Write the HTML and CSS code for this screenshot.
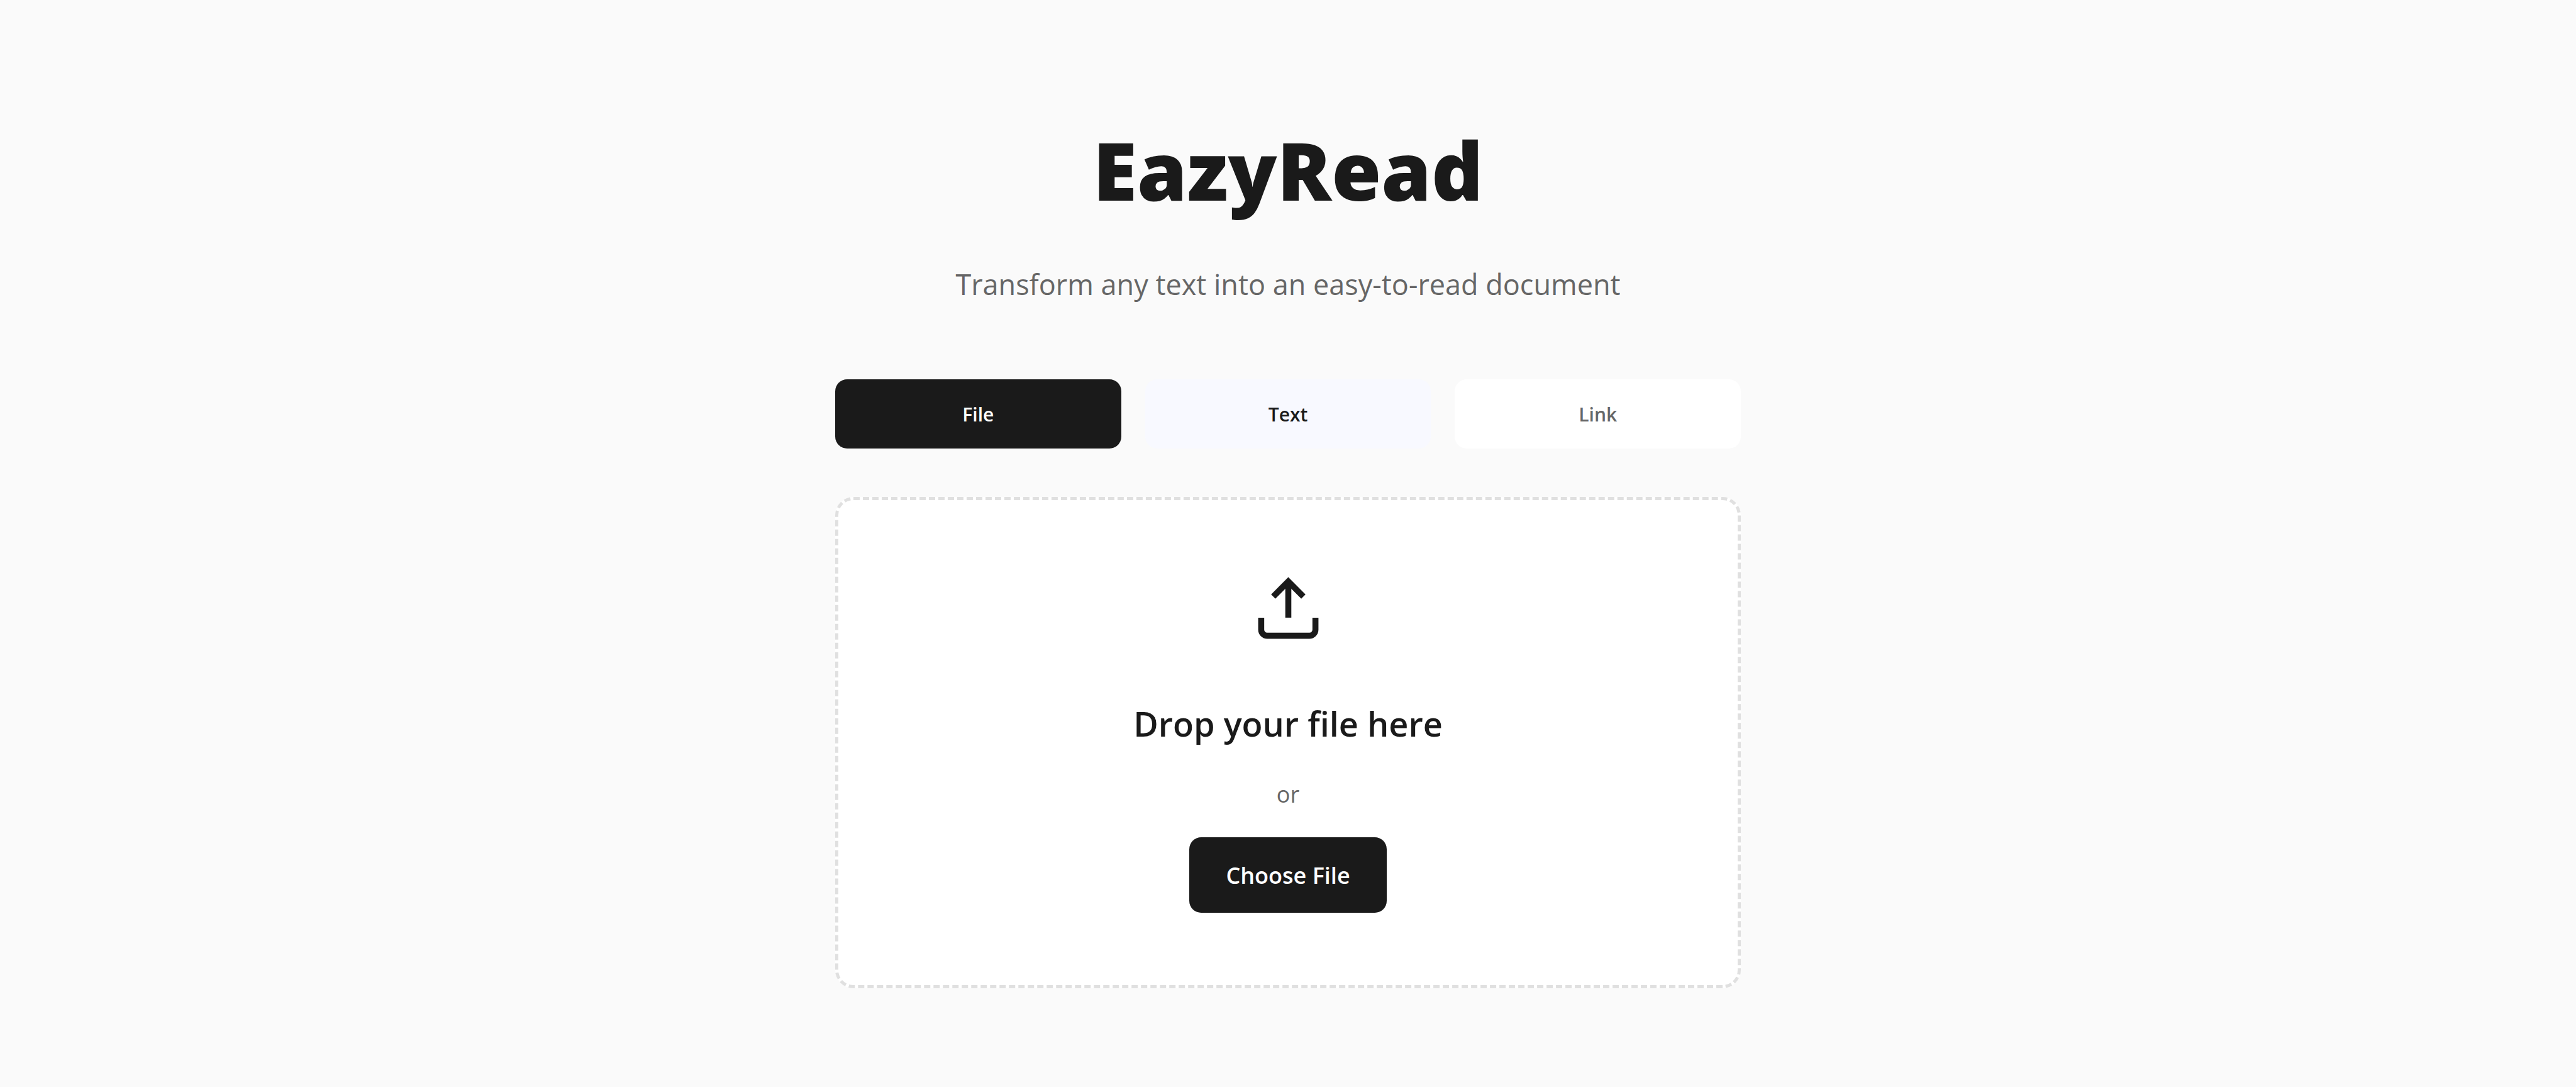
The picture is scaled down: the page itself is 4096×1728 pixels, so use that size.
FILE: index.html
```html
<!DOCTYPE html>
<html lang="en">
<head>
  <meta charset="utf-8">
  <meta name="viewport" content="width=device-width, initial-scale=1">
  <title>EazyRead</title>
  <link rel="stylesheet" href="styles.css">
</head>
<body>
  <main class="page">
    <header class="intro">
      <h1 class="title">EazyRead</h1>
      <p class="subtitle">Transform any text into an easy-to-read document</p>
    </header>

    <div class="tabs" role="tablist">
      <button class="tab tab-active" type="button" role="tab" aria-selected="true">File</button>
      <button class="tab tab-highlight" type="button" role="tab" aria-selected="false">Text</button>
      <button class="tab" type="button" role="tab" aria-selected="false">Link</button>
    </div>

    <section class="dropzone">
      <svg class="upload-icon" viewBox="0 0 24 24" fill="none" stroke="currentColor" stroke-width="2" aria-hidden="true">
        <path d="M21 15v4a2 2 0 0 1-2 2H5a2 2 0 0 1-2-2v-4"/>
        <polyline points="17 8 12 3 7 8"/>
        <line x1="12" y1="3" x2="12" y2="15"/>
      </svg>
      <h2 class="drop-title">Drop your file here</h2>
      <p class="drop-or">or</p>
      <button class="choose" type="button">Choose File</button>
    </section>
  </main>
</body>
</html>
```
FILE: styles.css
```css
* {
  box-sizing: border-box;
  margin: 0;
}

body {
  background: #fafafa;
  color: #1a1a1a;
  font-family: "Open Sans", "Noto Sans", sans-serif;
}

.page {
  max-width: 1440px;
  margin: 0 auto;
  padding: 190px 0 96px;
}

.intro {
  display: flex;
  flex-direction: column;
  gap: 66px;
  margin-bottom: 115px;
  text-align: center;
}

.title {
  font-size: 128px;
  font-weight: 800;
  line-height: 160px;
}

.subtitle {
  color: #666;
  font-size: 45px;
  line-height: 72px;
}

.tabs {
  display: flex;
  gap: 38px;
  margin-bottom: 77px;
}

.tab {
  flex: 1;
  padding: 33px 32px 31px;
  border: 0;
  border-radius: 19px;
  background: #fff;
  color: #666;
  font-family: inherit;
  font-size: 30px;
  font-weight: 600;
  line-height: 46px;
}

.tab-active {
  background: #1a1a1a;
  color: #fff;
}

.tab-highlight {
  background: #f8f9ff;
  color: #1a1a1a;
}

.dropzone {
  display: flex;
  flex-direction: column;
  align-items: center;
  padding: 115px;
  border: 5px dashed #e0e0e0;
  border-radius: 29px;
  background: #fff;
}

.upload-icon {
  width: 115px;
  height: 115px;
  margin-bottom: 82px;
}

.drop-title {
  margin-bottom: 41px;
  font-size: 54px;
  font-weight: 600;
  line-height: 86px;
}

.drop-or {
  margin-bottom: 39px;
  color: #666;
  font-size: 36px;
  line-height: 58px;
}

.choose {
  padding: 32px 58px 30px;
  border: 0;
  border-radius: 19px;
  background: #1a1a1a;
  color: #fff;
  font-family: inherit;
  font-size: 36px;
  font-weight: 600;
  line-height: 58px;
}
```
